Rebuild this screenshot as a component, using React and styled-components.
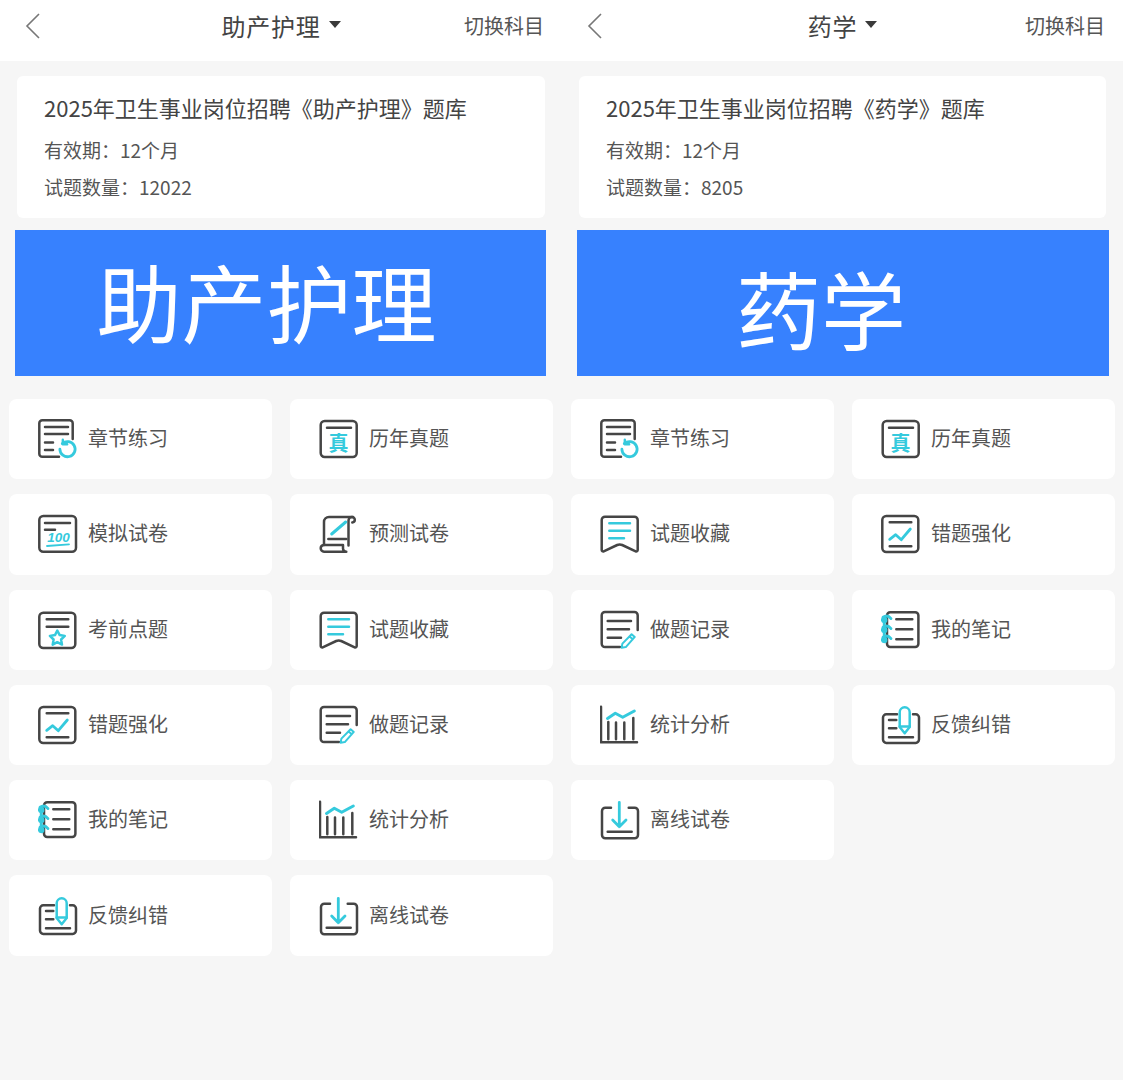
import React from "react";
import styled, { createGlobalStyle } from "styled-components";

const DARK = "#454545";
const CYAN = "#35cadd";
const COLON = "\uFF1A";

const GlobalStyle = createGlobalStyle`
  html, body {
    margin: 0;
    padding: 0;
    background: #f6f6f6;
  }
  body {
    font-family: "Noto Sans CJK SC", "Noto Sans", sans-serif;
  }
`;

const Page = styled.div`
  display: grid;
  grid-template-columns: 562px 561px;
  width: 1123px;
  height: 1080px;
  overflow: hidden;
  background: #f6f6f6;
`;

const Panel = styled.section`
  display: flex;
  flex-direction: column;
`;

const Header = styled.header`
  display: grid;
  grid-template-columns: 1fr auto 1fr;
  align-items: center;
  height: 61px;
  padding: 0 18px 9px 25px;
  box-sizing: border-box;
  background: #fff;
`;

const BackButton = styled.button`
  display: flex;
  padding: 0;
  border: 0;
  background: none;
  justify-self: start;
`;

const TitleWrap = styled.div`
  display: flex;
  align-items: center;
  gap: 8px;
  margin-right: 7px;
`;

const Title = styled.h1`
  margin: 0;
  font-size: 24px;
  font-weight: 400;
  line-height: 32px;
  letter-spacing: 0.8px;
  color: #444;
`;

const Caret = styled.span`
  width: 0;
  height: 0;
  margin-top: -3px;
  border-left: 6px solid transparent;
  border-right: 6px solid transparent;
  border-top: 7px solid #3a3a3a;
`;

const SwitchLink = styled.a`
  justify-self: end;
  font-size: 20px;
  line-height: 28px;
  color: #555;
`;

const InfoCard = styled.div`
  height: 142px;
  margin: 15px 17px 12px;
  padding: 16px 27px 0;
  box-sizing: border-box;
  border-radius: 6px;
  background: #fff;
`;

const InfoTitle = styled.h2`
  margin: 0 0 15px;
  font-size: 22px;
  font-weight: 400;
  line-height: 30px;
  color: #444;
`;

const InfoLine = styled.p`
  margin: 0 0 11px;
  font-size: 19px;
  line-height: 26px;
  color: #555;
`;

const Banner = styled.div`
  display: flex;
  align-items: center;
  justify-content: center;
  height: 146px;
  margin: 0 ${(p) => p.$marginRight}px 0 15px;
  padding-right: ${(p) => p.$shiftX}px;
  padding-top: ${(p) => p.$shiftY}px;
  padding-bottom: 8px;
  box-sizing: border-box;
  background: #3781fe;
  color: #fff;
  font-size: 85px;
  line-height: 1;
  font-weight: 400;
`;

const TileGrid = styled.div`
  display: grid;
  grid-template-columns: 263px 263px;
  grid-auto-rows: 80.3px;
  column-gap: 18px;
  row-gap: 15px;
  padding: 23px 9px 0;
`;

const Tile = styled.div`
  display: flex;
  align-items: center;
  gap: 10px;
  padding-left: 29px;
  border-radius: 8px;
  background: #fff;
`;

const TileLabel = styled.span`
  margin-top: -2px;
  font-size: 20px;
  line-height: 28px;
  color: #555;
`;

const Glyph = styled.svg`
  flex: none;
  width: 40px;
  height: 40px;
  fill: none;
  stroke: ${DARK};
  stroke-width: 2.5;
  stroke-linecap: round;
  stroke-linejoin: round;
`;

const Accent = styled.g`
  stroke: ${CYAN};
`;

const GlyphText = styled.text`
  fill: ${CYAN};
  stroke: none;
  font-family: ${(p) => p.$family};
  font-size: ${(p) => p.$size}px;
  font-weight: ${(p) => p.$weight};
  font-style: ${(p) => (p.$italic ? "italic" : "normal")};
  text-anchor: middle;
`;

const icons = {
  chapter: (
    <>
      <path d="M21 37.7H4.3a3 3 0 0 1-3-3V4.3a3 3 0 0 1 3-3h27.4a3 3 0 0 1 3 3V20" />
      <path d="M7 8h23M7 15h23M7 23.5h8M7 31h8" />
      <Accent>
        <path d="M24.3 24.6a7.6 7.6 0 1 1-2.4 5.6" strokeWidth="2.8" />
        <path d="M24.8 20.8v4.4h4.4" strokeWidth="2.4" />
      </Accent>
    </>
  ),
  real: (
    <>
      <rect x="1.7" y="2" width="36" height="36" rx="4" />
      <path d="M8 8.7h24" />
      <GlyphText x="19.5" y="32" $size={20} $weight={700} $family={`"Noto Sans CJK SC", sans-serif`}>真</GlyphText>
    </>
  ),
  mock: (
    <>
      <rect x="1.3" y="2" width="36.7" height="35.7" rx="4" />
      <path d="M7 9h25M7 15.7h10" />
      <GlyphText x="20.5" y="28" $size={13.5} $weight={700} $italic $family={`"Liberation Sans", sans-serif`}>100</GlyphText>
      <Accent>
        <path d="M9 32l22-1.6" strokeWidth="1.8" />
      </Accent>
    </>
  ),
  predict: (
    <>
      <path d="M5 31V8a5 5 0 0 1 5-5h24" />
      <path d="M29.5 31.5V6.5A3.5 3.5 0 0 1 33 3a2.8 2.8 0 0 1 2.8 2.8c0 1.5-1 2.6-2.5 2.7" />
      <path d="M4.6 31h19.4v3.4a3.3 3.3 0 0 0 3.3 3.3H5a3.4 3.4 0 0 1-3.3-3.4A3.3 3.3 0 0 1 4.6 31z" />
      <path d="M9.3 25h18" />
      <Accent>
        <path d="M12.7 20L26.7 8" strokeWidth="3" />
      </Accent>
    </>
  ),
  star: (
    <>
      <rect x="1.3" y="2.7" width="36" height="35.3" rx="4" />
      <path d="M8.7 9.3h21.6M8.7 16.7h21.6" />
      <Accent>
        <path d="M19.3 20.5l2.4 4.6 5.1.8-3.7 3.6.9 5.1-4.7-2.4-4.6 2.4.9-5.1-3.7-3.6 5.1-.8z" />
      </Accent>
    </>
  ),
  wrong: (
    <>
      <rect x="1.3" y="2" width="36" height="36" rx="4" />
      <path d="M8.7 8.3h21.6M8.7 32.3h21.6" />
      <Accent>
        <path d="M8.7 25.3l6-4.6 5.6 5 9-10.7" strokeWidth="2.8" />
      </Accent>
    </>
  ),
  collect: (
    <>
      <path d="M1.7 6a3.3 3.3 0 0 1 3.3-3.3h29.4A3.3 3.3 0 0 1 37.7 6v30a1.4 1.4 0 0 1-2 1.3l-13.5-6.3a6 6 0 0 0-5 0L3.7 37.3a1.4 1.4 0 0 1-2-1.3z" />
      <Accent>
        <path d="M9.3 9.3H30M9.3 16.7H30M9.3 24.3H24" />
      </Accent>
    </>
  ),
  record: (
    <>
      <path d="M20 37H5a3.3 3.3 0 0 1-3.3-3.3V5.3A3.3 3.3 0 0 1 5 2h29.4a3.3 3.3 0 0 1 3.3 3.3V20" />
      <path d="M7.7 11H31M7.7 19.3H29M7.7 27.7H21" />
      <Accent>
        <path d="M31.6 24.2l3.2 2.7-9 10.2-4.2.6.8-4.1zM29.6 26.6l3.2 2.7" strokeWidth="2" />
      </Accent>
    </>
  ),
  note: (
    <>
      <path d="M6 5.5a3.2 3.2 0 0 1 3.2-3.2h25a3.2 3.2 0 0 1 3.2 3.2v28.3a3.2 3.2 0 0 1-3.2 3.2h-25A3.2 3.2 0 0 1 6 33.8V5.5z" />
      <path d="M15.3 9.3h16M15.3 19.3h16M15.3 29.3h16" />
      <Accent>
        <circle cx="3.2" cy="10" r="2" fill={CYAN} />
        <circle cx="3.2" cy="20" r="2" fill={CYAN} />
        <circle cx="3.2" cy="30" r="2" fill={CYAN} />
        <path d="M2 7.2c3-2 6-1.2 8 1.4M2 17.2c3-2 6-1.2 8 1.4M2 27.2c3-2 6-1.2 8 1.4" strokeWidth="2.8" />
        <path d="M3.2 12v6M3.2 22v6" strokeWidth="2.8" />
      </Accent>
    </>
  ),
  feedback: (
    <>
      <path d="M16 9.3H5.3a3.3 3.3 0 0 0-3.3 3.3v22a3.3 3.3 0 0 0 3.3 3.3h29.4a3.3 3.3 0 0 0 3.3-3.3v-22a3.3 3.3 0 0 0-3.3-3.3H32" />
      <path d="M8 15h7.3M8 23.3h7.3M8 32.3h24" />
      <Accent>
        <path d="M18.7 7.3a5 5 0 0 1 10 0v14.7l-5 6.3-5-6.3z" />
        <path d="M18.7 21.5h10" />
      </Accent>
    </>
  ),
  stats: (
    <>
      <path d="M1 1.7v35.6h36" />
      <path d="M8.3 17v17.3M16 17.5v16.8M24.3 17.5v16.8M33.3 13v21.3" />
      <Accent>
        <path d="M7.5 13.5l7.8-5.2 7.4 4 11.6-6.3" strokeWidth="3" />
      </Accent>
    </>
  ),
  offline: (
    <>
      <path d="M11 7.7H5.3A3.3 3.3 0 0 0 2 11v24a3.3 3.3 0 0 0 3.3 3.3h29.4A3.3 3.3 0 0 0 38 35V11a3.3 3.3 0 0 0-3.3-3.3h-6" />
      <path d="M7.7 31.7h24" />
      <Accent>
        <path d="M19.3 2.3v24.4M12.7 20l6.6 6.7 6.7-6.7" strokeWidth="2.8" />
      </Accent>
    </>
  ),
};

const subjects = [
  {
    name: "助产护理",
    count: "12022",
    shiftX: 28,
    shiftY: 0,
    bannerMargin: 16,
    tiles: [
      ["chapter", "章节练习"],
      ["real", "历年真题"],
      ["mock", "模拟试卷"],
      ["predict", "预测试卷"],
      ["star", "考前点题"],
      ["collect", "试题收藏"],
      ["wrong", "错题强化"],
      ["record", "做题记录"],
      ["note", "我的笔记"],
      ["stats", "统计分析"],
      ["feedback", "反馈纠错"],
      ["offline", "离线试卷"],
    ],
  },
  {
    name: "药学",
    count: "8205",
    shiftX: 44,
    shiftY: 14,
    bannerMargin: 14,
    tiles: [
      ["chapter", "章节练习"],
      ["real", "历年真题"],
      ["collect", "试题收藏"],
      ["wrong", "错题强化"],
      ["record", "做题记录"],
      ["note", "我的笔记"],
      ["stats", "统计分析"],
      ["feedback", "反馈纠错"],
      ["offline", "离线试卷"],
    ],
  },
];

function SubjectPanel({ subject }) {
  return (
    <Panel>
      <Header>
        <BackButton aria-label="返回">
          <svg width="16" height="26" viewBox="0 0 16 26" fill="none" stroke="#777" strokeWidth="1.6">
            <path d="M14 1L2 13l12 12" />
          </svg>
        </BackButton>
        <TitleWrap>
          <Title>{subject.name}</Title>
          <Caret />
        </TitleWrap>
        <SwitchLink>切换科目</SwitchLink>
      </Header>
      <InfoCard>
        <InfoTitle>2025年卫生事业岗位招聘《{subject.name}》题库</InfoTitle>
        <InfoLine>有效期{COLON}12个月</InfoLine>
        <InfoLine>试题数量{COLON}{subject.count}</InfoLine>
      </InfoCard>
      <Banner $shiftX={subject.shiftX} $shiftY={subject.shiftY} $marginRight={subject.bannerMargin}>
        {subject.name}
      </Banner>
      <TileGrid>
        {subject.tiles.map(([icon, label]) => (
          <Tile key={label}>
            <Glyph viewBox="0 0 40 40">{icons[icon]}</Glyph>
            <TileLabel>{label}</TileLabel>
          </Tile>
        ))}
      </TileGrid>
    </Panel>
  );
}

export default function App() {
  return (
    <>
      <GlobalStyle />
      <Page>
        {subjects.map((s) => (
          <SubjectPanel key={s.name} subject={s} />
        ))}
      </Page>
    </>
  );
}
